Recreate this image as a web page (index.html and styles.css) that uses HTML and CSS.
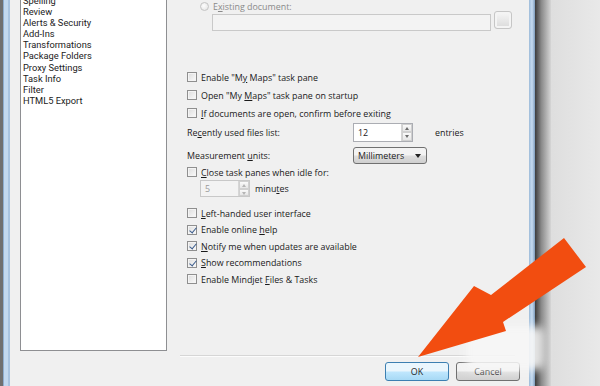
FILE: index.html
```html
<!DOCTYPE html>
<html lang="en">
<head>
  <meta charset="UTF-8">
  <title>Options</title>
  <link rel="stylesheet" href="styles.css">
</head>
<body>
  <div class="screen">
    <div class="frame-left"></div>

    <div class="dialog">
      <div class="dialog-body">
        <ul class="listbox">
          <li>Spelling</li>
          <li>Review</li>
          <li>Alerts &amp; Security</li>
          <li>Add-Ins</li>
          <li>Transformations</li>
          <li>Package Folders</li>
          <li>Proxy Settings</li>
          <li>Task Info</li>
          <li>Filter</li>
          <li>HTML5 Export</li>
        </ul>

        <div class="panel">
          <div class="radio-row">
            <span class="radio"></span>
            <span class="muted">E<u>x</u>isting document:</span>
          </div>
          <div class="field-row">
            <span class="field"></span>
            <span class="browse"></span>
          </div>

          <div class="check-row first"><span class="cb"></span><span>Enable "M<u>y</u> Maps" task pane</span></div>
          <div class="check-row"><span class="cb"></span><span>Open "My <u>M</u>aps" task pane on startup</span></div>
          <div class="check-row"><span class="cb"></span><span><u>I</u>f documents are open, confirm before exiting</span></div>

          <div class="value-row">
            <span class="label">Re<u>c</u>ently used files list:</span>
            <span class="spin"><span class="spin-text">12</span><span class="spin-btns"><i class="up"></i><i class="down"></i></span></span>
            <span class="after">entries</span>
          </div>
          <div class="value-row units">
            <span class="label">Measurement <u>u</u>nits:</span>
            <span class="combo">Millimeters<i class="caret"></i></span>
          </div>

          <div class="check-row close"><span class="cb"></span><span><u>C</u>lose task panes when idle for:</span></div>
          <div class="minutes-row">
            <span class="spin small disabled"><span class="spin-text">5</span><span class="spin-btns"><i class="up"></i><i class="down"></i></span></span>
            <span>minu<u>t</u>es</span>
          </div>

          <div class="options">
            <div class="check-row"><span class="cb"></span><span><u>L</u>eft-handed user interface</span></div>
            <div class="check-row"><span class="cb on"></span><span>Enable online <u>h</u>elp</span></div>
            <div class="check-row"><span class="cb on"></span><span><u>N</u>otify me when updates are available</span></div>
            <div class="check-row"><span class="cb on"></span><span><u>S</u>how recommendations</span></div>
            <div class="check-row"><span class="cb"></span><span>Enable Mindjet <u>F</u>iles &amp; Tasks</span></div>
          </div>
        </div>
      </div>

      <div class="separator"></div>
      <div class="buttons">
        <button class="btn default">OK</button>
        <button class="btn">Cancel</button>
      </div>
    </div>

    <div class="frame-right"></div>
    <div class="shadow"></div>
    <div class="desktop"></div>

    <!-- annotation drawn over the screenshot -->
    <svg class="overlay" width="600" height="386" viewBox="0 0 600 386">
      <defs>
        <filter id="soft" x="-20%" y="-20%" width="140%" height="140%">
          <feGaussianBlur stdDeviation="4"/>
        </filter>
      </defs>
      <rect x="466" y="326" width="78" height="44" rx="8" fill="#f7f7f7" filter="url(#soft)" opacity="0.9"/>
      <polygon points="418,357 474,286 491,295 564,238 586,267 503,322 506,331" fill="#f24d10"/>
    </svg>
  </div>
</body>
</html>
```

FILE: styles.css
```css
* {
  box-sizing: border-box;
  margin: 0;
  padding: 0;
}

body {
  width: 600px;
  height: 386px;
  overflow: hidden;
  font-family: "Open Sans", "Noto Sans", sans-serif;
  font-size: 8.9px;
  color: #1a1a1a;
  background-color: #e4e4e4;
}

u {
  text-underline-offset: 1px;
}

.screen {
  position: relative;
  display: flex;
  height: 386px;
}

.frame-left {
  width: 10px;
  background: linear-gradient(to right, #707070 0 3px, #8eaed0 3px 4px, #c3d9ef 4px 8px, #a9c4e0 8px 10px);
}

.dialog {
  width: 519px;
  display: flex;
  flex-direction: column;
  background-color: #f0f0f0;
}

.dialog-body {
  display: flex;
  height: 355px;
  overflow: hidden;
  padding-left: 10px;
}

.listbox {
  list-style: none;
  width: 147px;
  height: 357px;
  margin-top: -6px;
  padding: 0 2px;
  background-color: #fff;
  border: 1px solid #8e8f92;
  font-family: Roboto, "Open Sans", sans-serif;
  font-size: 9.3px;
  color: #222;
}

.listbox li {
  height: 11.1px;
  line-height: 11.1px;
}

.panel {
  flex: 1;
  display: flex;
  flex-direction: column;
  padding-left: 20px;
}

.radio-row {
  display: flex;
  align-items: center;
  gap: 4px;
  height: 12px;
  padding-left: 13px;
}

.radio {
  width: 9px;
  height: 9px;
  border-radius: 50%;
  border: 1px solid #c4c4c4;
  background: radial-gradient(circle at 40% 40%, #fdfdfd, #e2e2e2);
}

.muted {
  color: #8a8a8a;
}

.field-row {
  display: flex;
  align-items: flex-start;
  gap: 3px;
  height: 20px;
  margin-top: -1px;
  padding-left: 25px;
}

.field {
  width: 279px;
  height: 17px;
  margin-top: 3px;
  border: 1px solid #c9c9c9;
  background-color: #f3f3f3;
}

.browse {
  width: 18px;
  height: 18px;
  border: 1px solid #c6c6c6;
  border-radius: 3px;
  background: linear-gradient(#f7f7f7, #dadada);
  box-shadow: inset 0 0 0 2px #f4f4f4;
}

.check-row {
  display: flex;
  align-items: center;
  gap: 4px;
  height: 18px;
}

.check-row.first {
  margin-top: 37px;
}

.cb {
  position: relative;
  width: 10px;
  height: 10px;
  border: 1px solid #8f8f8f;
  background: linear-gradient(135deg, #dcdcdc, #fbfbfb);
  box-shadow: inset 0 0 0 1px #f4f4f4;
}

.cb.on::after {
  content: "";
  position: absolute;
  left: 2.5px;
  top: 0;
  width: 3px;
  height: 6px;
  border-right: 1.6px solid #3b5c8c;
  border-bottom: 1.6px solid #3b5c8c;
  transform: rotate(40deg);
}

.value-row {
  display: flex;
  align-items: center;
  height: 20px;
}

.value-row .label {
  width: 166px;
}

.value-row.units {
  height: 17px;
  margin-top: 5px;
}

.after {
  margin-left: 22px;
}

.spin {
  display: flex;
  width: 60px;
  height: 19px;
  border: 1px solid #abadb3;
  background-color: #fff;
}

.spin-text {
  flex: 1;
  padding-left: 4px;
  line-height: 17px;
}

.spin-btns {
  width: 11px;
  display: flex;
  flex-direction: column;
  border-left: 1px solid #d6d6d6;
}

.spin-btns i {
  flex: 1;
  position: relative;
  background: linear-gradient(#fafafa, #e6e6e6);
  border: 1px solid #d0d0d0;
}

.spin-btns i::after {
  content: "";
  position: absolute;
  left: 2px;
  border-left: 2.5px solid transparent;
  border-right: 2.5px solid transparent;
}

.spin-btns .up::after {
  top: 2px;
  border-bottom: 3px solid #6c6c6c;
}

.spin-btns .down::after {
  top: 2px;
  border-top: 3px solid #6c6c6c;
}

.spin.small {
  width: 50px;
  height: 17px;
}

.spin.small .spin-text {
  line-height: 15px;
}

.spin.disabled {
  background-color: #f3f3f3;
  border-color: #c8c8c8;
  color: #9a9a9a;
}

.spin.disabled .spin-btns i::after {
  border-top-color: #b5b5b5;
  border-bottom-color: #b5b5b5;
}

.combo {
  position: relative;
  width: 74px;
  height: 17px;
  padding-left: 4px;
  line-height: 15px;
  border: 1px solid #707070;
  border-radius: 3px;
  background: linear-gradient(#f3f3f3 0 45%, #dddddd 55%, #cfcfcf);
}

.caret {
  position: absolute;
  right: 5px;
  top: 6px;
  border-left: 3.5px solid transparent;
  border-right: 3.5px solid transparent;
  border-top: 4px solid #222;
}

.check-row.close {
  height: 16px;
}

.minutes-row {
  display: flex;
  align-items: center;
  gap: 5px;
  height: 17px;
  padding-left: 13px;
}

.options {
  margin-top: 8px;
}

.options .check-row {
  height: 16.5px;
}

.separator {
  height: 2px;
  margin-left: 170px;
  width: 335px;
  border-top: 1px solid #d6d6d6;
  border-bottom: 1px solid #fcfcfc;
}

.buttons {
  display: flex;
  justify-content: flex-end;
  gap: 7px;
  padding: 5px 9px 0 0;
}

.btn {
  width: 64px;
  height: 19px;
  font-family: inherit;
  font-size: 8.9px;
  color: #1e1e1e;
  border: 1px solid #707070;
  border-radius: 3px;
  background: linear-gradient(#f2f2f2 0 45%, #dcdcdc 55%, #d0d0d0);
}

.btn.default {
  border-color: #3c7fb1;
  background: linear-gradient(#eaf6fd 0 45%, #bee6fd 55%, #a7d9f5);
}

.frame-right {
  width: 6px;
  background: linear-gradient(to right, #9dbbd9, #c6dbf0 50%, #7e9cbc);
}

.shadow {
  width: 16px;
  background: linear-gradient(to right, #3c3c3c, #8a8a8a 40%, #d6d6d6);
}

.desktop {
  flex: 1;
  background: linear-gradient(to right, #dedede, #e9e9e9);
}

.overlay {
  position: absolute;
  left: 0;
  top: 0;
}
```
